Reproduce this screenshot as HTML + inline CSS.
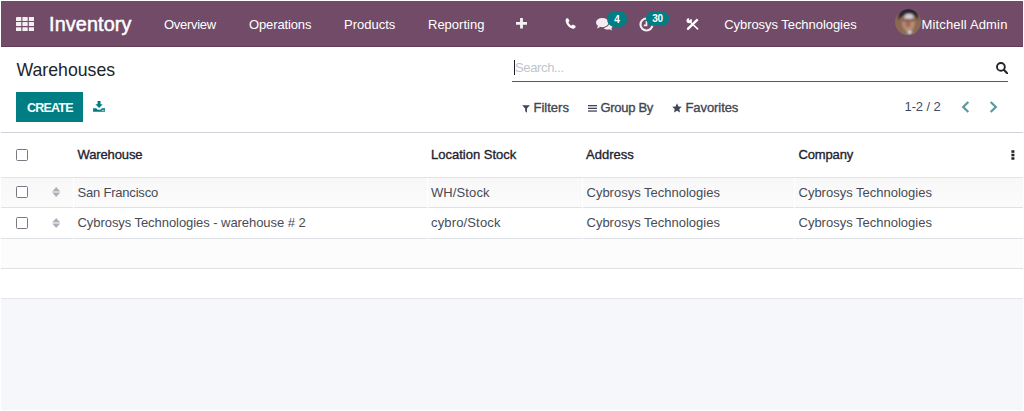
<!DOCTYPE html>
<html lang="en">
<head>
<meta charset="utf-8">
<title>Warehouses - Inventory</title>
<style>
html,body{margin:0;padding:0;}
body{width:1024px;height:411px;overflow:hidden;background:#fff;position:relative;
  font-family:"Liberation Sans",sans-serif;font-size:13px;color:#4c4c4c;}
.abs{position:absolute;white-space:nowrap;line-height:15px;}
#page{position:absolute;left:1px;top:1px;width:1022px;height:409px;background:#f6f7fa;overflow:hidden;}
#nav{position:absolute;left:0;top:0;width:1022px;height:45.800px;background:#714b67;box-shadow:inset 0 -1px 0 #5e3d55;}
#nav .t{color:#fff;top:15.5px;}
#cp{position:absolute;left:0;top:45.5px;width:1022px;height:86px;background:#fff;}
#tbl{position:absolute;left:0;top:131px;width:1022px;height:166px;background:#fff;}
.med{-webkit-text-stroke:0.35px currentColor;}
.hl{position:absolute;left:0;width:1022px;height:1px;background:#dee2e6;}
.cb{position:absolute;left:15px;width:10px;height:10px;border:1px solid #7d7683;border-radius:1.600px;background:#fff;}
.cell{color:#474b55;}
.hd{color:#1f2330;}
</style>
</head>
<body>
<div id="page">

  <!-- NAVBAR -->
  <div id="nav">
    <svg class="abs" style="left:14.900px;top:15.800px" width="18.100" height="14.200" preserveAspectRatio="none" viewBox="0 0 18.500 14.200"><g fill="#f4eef2"><rect x="0" y="0" width="5.400" height="4" rx=".5"/><rect x="6.55" y="0" width="5.400" height="4" rx=".5"/><rect x="13.1" y="0" width="5.400" height="4" rx=".5"/><rect x="0" y="5.1" width="5.400" height="4" rx=".5"/><rect x="6.55" y="5.1" width="5.400" height="4" rx=".5"/><rect x="13.1" y="5.1" width="5.400" height="4" rx=".5"/><rect x="0" y="10.2" width="5.400" height="4" rx=".5"/><rect x="6.55" y="10.2" width="5.400" height="4" rx=".5"/><rect x="13.1" y="10.2" width="5.400" height="4" rx=".5"/></g></svg>
    <div class="abs t" style="left:48.100px;top:12px;font-size:19.800px;line-height:23px;letter-spacing:.12px;-webkit-text-stroke:.5px #fff;">Inventory</div>
    <div class="abs t" style="left:163px;letter-spacing:-.3px;">Overview</div>
    <div class="abs t" style="left:248px;letter-spacing:-.13px;">Operations</div>
    <div class="abs t" style="left:343px;">Products</div>
    <div class="abs t" style="left:427px;">Reporting</div>

    <!-- plus -->
    <svg class="abs" style="left:514.600px;top:17.300px" width="11" height="10.600" viewBox="0 0 11 11" preserveAspectRatio="none"><path d="M4.100 0h2.800v4.100H11v2.800H6.900V11H4.100V6.900H0V4.100h4.100z" fill="#f6f1f4"/></svg>
    <!-- phone -->
    <svg class="abs" style="left:563.500px;top:17.200px" width="12" height="12" viewBox="0 0 12 12"><path d="M1.300.600C2 .100 2.900.100 3.400.800l.9 1.700c.2.500.1 1-.3 1.300l-.7.500c.5 1.500 1.700 2.800 3.200 3.500l.6-.8c.3-.4.900-.5 1.300-.200l1.700 1c.6.400.7 1.100.3 1.600l-.5.700c-.5.600-1.300.900-2.100.700C4.300 10 1.600 7.100.7 3.300.500 2.200.700 1.200 1.300.600z" fill="#fff"/></svg>
    <!-- chat -->
    <svg class="abs" style="left:595px;top:17px" width="17" height="13" viewBox="0 0 17 13">
      <ellipse cx="6.300" cy="4.600" rx="6.300" ry="4.600" fill="#f3edf1"/>
      <path d="M2.200 7.500L.8 10.600l4-1.800z" fill="#f3edf1"/>
      <path d="M13.200 4.200c2 .5 3.500 1.900 3.500 3.600 0 1-.5 1.900-1.400 2.600l.9 2.100-2.900-1.200c-.5.100-1 .2-1.500.2-1.700 0-3.200-.6-4.100-1.600 3.100-.3 5.600-2.400 5.600-5.100 0-.2 0-.4-.1-.6z" fill="#f3edf1"/>
    </svg>
    <div class="abs" style="left:606px;top:10px;width:20px;height:16px;border-radius:8px;background:#017e84;color:#fff;font-size:10px;font-weight:700;line-height:17px;text-align:center;">4</div>
    <!-- clock -->
    <svg class="abs" style="left:637.700px;top:15.700px" width="15" height="15" viewBox="0 0 15 15">
      <circle cx="7.500" cy="7.500" r="6" fill="none" stroke="#f3edf1" stroke-width="2.200"/>
      <path d="M7.500 4v4.300H4.800" fill="none" stroke="#f3edf1" stroke-width="1.700"/>
    </svg>
    <div class="abs" style="left:645.200px;top:9.800px;width:22.800px;height:15.400px;border-radius:7.700px;background:#017e84;color:#fff;font-size:10px;font-weight:700;line-height:16px;text-align:center;letter-spacing:-.3px;">30</div>
    <!-- tools -->
    <svg class="abs" style="left:685.100px;top:15.600px" width="14" height="14" viewBox="0 0 14 14">
      <path d="M3.200 4L11.600 11.900" stroke="#fff" stroke-width="1.500" stroke-linecap="round"/>
      <path d="M1.900 11.900L11.700 2.300" stroke="#fff" stroke-width="2.400" stroke-linecap="butt"/>
      <circle cx="1.900" cy="11.900" r="1.100" fill="#fff"/>
      <circle cx="3.200" cy="3.600" r="2.700" fill="#fff"/>
      <path d="M3.300 3.500L2.600 -.5L6.300 .800z" fill="#714b67"/>
    </svg>
    <div class="abs t" style="left:723.200px;letter-spacing:-.05px;">Cybrosys Technologies</div>

    <!-- avatar -->
    <svg class="abs" style="left:893.800px;top:7.700px" width="26" height="26" viewBox="0 0 26 26">
      <defs>
        <clipPath id="av"><circle cx="13" cy="13" r="13"/></clipPath>
        <filter id="bl" x="-20%" y="-20%" width="140%" height="140%"><feGaussianBlur stdDeviation="1"/></filter>
      </defs>
      <g clip-path="url(#av)">
        <rect width="26" height="26" fill="#8c6850"/>
        <g filter="url(#bl)">
          <path d="M3 11C3 2 9 -1 14 -1s10 3 9 12c-1.500-3-4-5-9-5S5 8 3 11z" fill="#2a2036"/>
          <ellipse cx="13.500" cy="14" rx="6.500" ry="8.500" fill="#b48e78"/>
          <ellipse cx="14" cy="7.500" rx="4.500" ry="2.800" fill="#d6cace"/>
          <rect x="7.500" y="10.200" width="12" height="2" fill="#5e4a4c"/>
          <ellipse cx="13" cy="15" rx="2.500" ry="3" fill="#a4664a"/>
          <path d="M3 27c1-4 4-5 6-5.500l4 3 4-3c2 .5 5 1.500 6 5.500z" fill="#86705f"/>
          <path d="M12 22l2.500 3.500 3-3.500z" fill="#dfe4ee"/>
        </g>
      </g>
    </svg>
    <div class="abs t" style="left:920.5px;letter-spacing:.16px;">Mitchell Admin</div>
  </div>

  <!-- CONTROL PANEL -->
  <div id="cp">
    <div class="abs" style="left:15.500px;top:13px;font-size:17.700px;line-height:21px;color:#212529;">Warehouses</div>

    <!-- search -->
    <div class="abs" style="left:513px;top:13.200px;width:1.200px;height:15.200px;background:#1b1b2b;"></div>
    <div class="abs" style="left:514px;top:13.500px;color:#bfc5cd;letter-spacing:-.35px;">Search...</div>
    <div class="abs" style="left:511px;top:34.500px;width:496px;height:1.300px;background:#017e84;"></div>
    <svg class="abs" style="left:995px;top:15px" width="12" height="12" viewBox="0 0 12 12">
      <circle cx="4.900" cy="4.900" r="3.900" fill="none" stroke="#212529" stroke-width="1.900"/>
      <path d="M7.800 7.800L11.200 11.200" stroke="#212529" stroke-width="2.100" stroke-linecap="round"/>
    </svg>

    <!-- create -->
    <div class="abs" style="left:15px;top:45.500px;width:67px;height:30px;background:#017e84;"></div>
    <div class="abs" style="left:26px;top:54.500px;color:#fff;font-weight:700;font-size:12.500px;letter-spacing:-.8px;">CREATE</div>
    <!-- download -->
    <svg class="abs" style="left:92px;top:54.500px" width="12.300" height="11.200" viewBox="0 0 13 12">
      <path d="M4.800 0h3.200v3.600h2.300L6.400 7.500 2.500 3.600h2.300z" fill="#017e84"/>
      <path d="M0 7.800h3.300l1.600 1.600h3l1.600-1.600H12.800v3.600H0z" fill="#017e84"/>
      <rect x="9.300" y="9.500" width="1.100" height="1" fill="#fff"/><rect x="11" y="9.500" width="1.100" height="1" fill="#fff"/>
    </svg>

    <!-- filters -->
    <svg class="abs" style="left:521.100px;top:58.100px" width="8.100" height="8.100" viewBox="0 0 9 9"><path d="M.2.300h8.600L5.500 4v4.500L3.500 7V4z" fill="#3f4756"/></svg>
    <div class="abs med" style="left:532.500px;top:53px;color:#3f4756;">Filters</div>
    <svg class="abs" style="left:586.900px;top:58.450px" width="9.400" height="7" viewBox="0 0 9.400 7"><rect x="0" y="0" width="9.400" height="1.300" fill="#3f4756"/><rect x="0" y="2.700" width="9.400" height="1.300" fill="#3f4756"/><rect x="0" y="5.400" width="9.400" height="1.300" fill="#3f4756"/></svg>
    <div class="abs med" style="left:599.500px;top:53px;color:#3f4756;letter-spacing:-.3px;">Group By</div>
    <svg class="abs" style="left:671px;top:56.500px" width="10" height="10" viewBox="0 0 10 10"><path d="M5 .3l1.450 3.100 3.350.4-2.500 2.300.7 3.400L5 7.800 2 9.500l.7-3.400L.2 3.800l3.350-.4z" fill="#3f4756"/></svg>
    <div class="abs med" style="left:684.500px;top:53px;color:#3f4756;letter-spacing:-.08px;">Favorites</div>

    <!-- pager -->
    <div class="abs" style="left:903.500px;top:52px;color:#454a5a;letter-spacing:-.1px;">1-2 / 2</div>
    <svg class="abs" style="left:960px;top:54.500px" width="9" height="12" viewBox="0 0 9 12"><path d="M7.300 1L2.200 6l5.100 5" fill="none" stroke="#5d9ba1" stroke-width="2.300"/></svg>
    <svg class="abs" style="left:988px;top:54.500px" width="9" height="12" viewBox="0 0 9 12"><path d="M1.700 1l5.100 5-5.100 5" fill="none" stroke="#5d9ba1" stroke-width="2.300"/></svg>
  </div>

  <!-- TABLE -->
  <div id="tbl">
    <div class="hl" style="top:0;background:#ced2d9;"></div>
    <!-- header -->
    <div class="cb" style="top:17px;"></div>
    <div class="abs hd med" style="left:76.500px;top:14.500px;letter-spacing:-.12px;">Warehouse</div>
    <div class="abs hd med" style="left:430px;top:14.500px;">Location Stock</div>
    <div class="abs hd med" style="left:585px;top:14.500px;">Address</div>
    <div class="abs hd med" style="left:797.500px;top:14.500px;letter-spacing:-.15px;">Company</div>
    <svg class="abs" style="left:1010px;top:18.100px" width="4" height="10.300" viewBox="0 0 4 11" preserveAspectRatio="none"><rect x=".4" y=".3" width="3" height="2.700" fill="#212529"/><rect x=".4" y="4" width="3" height="2.700" fill="#212529"/><rect x=".4" y="7.700" width="3" height="2.700" fill="#212529"/></svg>
    <div class="hl" style="top:45px;background:#e0e3e8;"></div>

    <!-- row 1 -->
    <div class="abs" style="left:0;top:46px;width:1022px;height:29px;background:linear-gradient(#f8f8f9,#fbfbfc);"></div>
    <div class="cb" style="top:54px;"></div>
    <svg class="abs" style="left:51.300px;top:55.300px" width="8.400" height="10" viewBox="0 0 8 10"><path d="M0 4.400L4 0l4 4.400zM0 5.600l4 4.400 4-4.400z" fill="#adafb9"/></svg>
    <div class="abs cell" style="left:76.500px;top:53px;letter-spacing:-.2px;">San Francisco</div>
    <div class="abs cell" style="left:430px;top:53px;letter-spacing:.1px;">WH/Stock</div>
    <div class="abs cell" style="left:585.500px;top:53px;">Cybrosys Technologies</div>
    <div class="abs cell" style="left:797.500px;top:53px;">Cybrosys Technologies</div>
    <div class="hl" style="top:75px;"></div>

    <!-- row 2 -->
    <div class="cb" style="top:85px;"></div>
    <svg class="abs" style="left:51.300px;top:85.500px" width="8.400" height="10" viewBox="0 0 8 10"><path d="M0 4.400L4 0l4 4.400zM0 5.600l4 4.400 4-4.400z" fill="#adafb9"/></svg>
    <div class="abs cell" style="left:76.500px;top:83px;letter-spacing:-.06px;">Cybrosys Technologies - warehouse # 2</div>
    <div class="abs cell" style="left:430px;top:83px;letter-spacing:.15px;">cybro/Stock</div>
    <div class="abs cell" style="left:585.500px;top:83px;">Cybrosys Technologies</div>
    <div class="abs cell" style="left:797.500px;top:83px;">Cybrosys Technologies</div>
    <div class="hl" style="top:106px;"></div>

    <!-- column gaps -->
    <div class="abs" style="left:72px;top:46px;width:1px;height:61px;background:#fff;"></div>
    <div class="abs" style="left:426px;top:46px;width:1px;height:61px;background:#fff;"></div>
    <div class="abs" style="left:581px;top:46px;width:1px;height:61px;background:#fff;"></div>
    <div class="abs" style="left:793px;top:46px;width:1px;height:61px;background:#fff;"></div>

    <!-- empty rows -->
    <div class="abs" style="left:0;top:107px;width:1022px;height:29px;background:#fcfcfd;"></div>
    <div class="hl" style="top:136px;"></div>
    <div class="hl" style="top:166px;background:#e4e6ea;"></div>
  </div>

</div>
</body>
</html>
